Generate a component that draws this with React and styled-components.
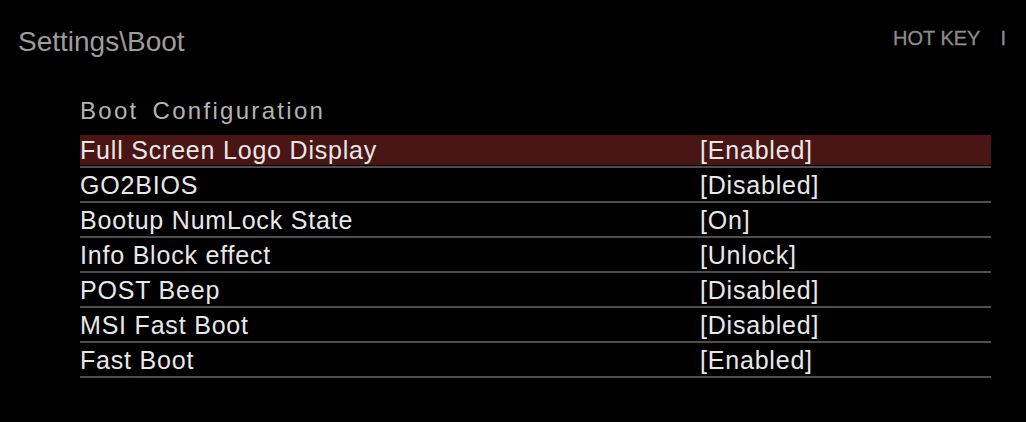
import React from 'react';
import styled, { createGlobalStyle } from 'styled-components';

const GlobalStyle = createGlobalStyle`
  html, body {
    margin: 0;
    background: #000;
  }
  body {
    font-family: "Liberation Sans", Arial, sans-serif;
  }
`;

const Screen = styled.div`
  width: 1026px;
  height: 422px;
  background: #000;
  overflow: hidden;
`;

const Header = styled.div`
  display: flex;
  justify-content: space-between;
  align-items: flex-start;
  padding: 26px 20px 0 18px;
`;

const Title = styled.div`
  font-size: 28px;
  line-height: 32px;
  color: #9c9c9c;
`;

const HotKey = styled.div`
  display: flex;
  gap: 20px;
  font-size: 20px;
  line-height: 24px;
  color: #8c8c8c;
  -webkit-text-stroke: 0.3px #8c8c8c;
`;

const Section = styled.div`
  margin: 39px 35px 0 80px;
`;

const SectionTitle = styled.div`
  font-size: 24px;
  line-height: 28px;
  color: #b4b4b4;
  letter-spacing: 2.3px;
  word-spacing: 5px;
  margin-bottom: 8px;
`;

const Row = styled.div`
  display: flex;
  height: 30px;
  padding: 2px 0 1px;
  border-bottom: 2px solid #4e4e4e;
  background: ${(p) => (p.$selected ? '#4a1515' : 'transparent')};
  background-clip: content-box;
  font-size: 25px;
  line-height: 30px;
  letter-spacing: 0.8px;
  color: #e8e8e8;
`;

const Label = styled.div`
  width: 620px;
  white-space: nowrap;
`;

const Value = styled.div`
  white-space: nowrap;
`;

const items = [
  ['Full Screen Logo Display', '[Enabled]'],
  ['GO2BIOS', '[Disabled]'],
  ['Bootup NumLock State', '[On]'],
  ['Info Block effect', '[Unlock]'],
  ['POST Beep', '[Disabled]'],
  ['MSI Fast Boot', '[Disabled]'],
  ['Fast Boot', '[Enabled]'],
];

export default function App() {
  return (
    <Screen>
      <GlobalStyle />
      <Header>
        <Title>Settings\Boot</Title>
        <HotKey>
          <span>HOT KEY</span>
          <span>I</span>
        </HotKey>
      </Header>
      <Section>
        <SectionTitle>Boot Configuration</SectionTitle>
        {items.map(([label, value], i) => (
          <Row key={label} $selected={i === 0}>
            <Label>{label}</Label>
            <Value>{value}</Value>
          </Row>
        ))}
      </Section>
    </Screen>
  );
}
